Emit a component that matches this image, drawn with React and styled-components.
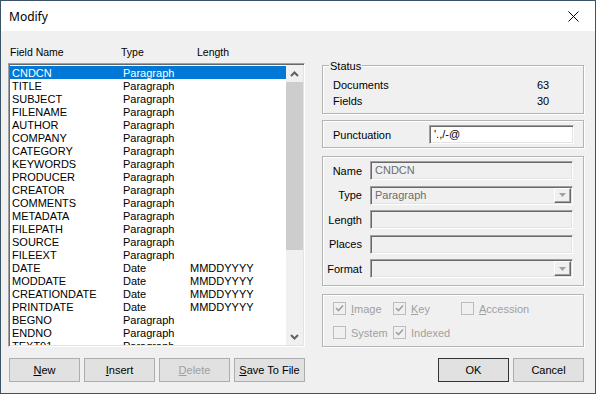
import React from 'react';
import styled, { createGlobalStyle } from 'styled-components';

const GlobalStyle = createGlobalStyle`
  html, body {
    margin: 0;
    padding: 0;
    background: #ffffff;
  }
  * {
    box-sizing: border-box;
  }
`;

const fields = [
  ['CNDCN', 'Paragraph', ''],
  ['TITLE', 'Paragraph', ''],
  ['SUBJECT', 'Paragraph', ''],
  ['FILENAME', 'Paragraph', ''],
  ['AUTHOR', 'Paragraph', ''],
  ['COMPANY', 'Paragraph', ''],
  ['CATEGORY', 'Paragraph', ''],
  ['KEYWORDS', 'Paragraph', ''],
  ['PRODUCER', 'Paragraph', ''],
  ['CREATOR', 'Paragraph', ''],
  ['COMMENTS', 'Paragraph', ''],
  ['METADATA', 'Paragraph', ''],
  ['FILEPATH', 'Paragraph', ''],
  ['SOURCE', 'Paragraph', ''],
  ['FILEEXT', 'Paragraph', ''],
  ['DATE', 'Date', 'MMDDYYYY'],
  ['MODDATE', 'Date', 'MMDDYYYY'],
  ['CREATIONDATE', 'Date', 'MMDDYYYY'],
  ['PRINTDATE', 'Date', 'MMDDYYYY'],
  ['BEGNO', 'Paragraph', ''],
  ['ENDNO', 'Paragraph', ''],
  ['TEXT01', 'Paragraph', ''],
];

const Window = styled.div`
  width: 596px;
  height: 394px;
  border: 1px solid #3b5468;
  display: flex;
  flex-direction: column;
  background: #f0f0f0;
  font-family: "Liberation Sans", Arial, sans-serif;
  font-size: 11px;
  color: #000;
  overflow: hidden;
`;

const TitleBar = styled.div`
  height: 30px;
  flex: none;
  background: #fff;
  display: flex;
  align-items: center;
  justify-content: space-between;
  padding: 0 16px 0 8px;
`;

const Title = styled.span`
  font-family: "Noto Sans", sans-serif;
  font-size: 12px;
  color: #000;
`;

const CloseIcon = () => (
  <svg width="11" height="11" viewBox="0 0 11 11">
    <path d="M0.5 0.5 L10.5 10.5 M10.5 0.5 L0.5 10.5" stroke="#000" strokeWidth="1" fill="none" />
  </svg>
);

const Body = styled.div`
  flex: 1;
  display: flex;
  flex-direction: column;
  padding: 14px 10px 11px 7px;
`;

const Main = styled.div`
  display: flex;
  gap: 17px;
`;

const LeftPane = styled.div`
  width: 297px;
  display: flex;
  flex-direction: column;
`;

const HeaderRow = styled.div`
  height: 14px;
  line-height: 15px;
  display: grid;
  grid-template-columns: 111px 76px 1fr;
  padding-left: 2px;
  margin-bottom: 4px;
  font-size: 10.5px;
`;

const ListBox = styled.div`
  height: 284px;
  background: #fff;
  border: 1px solid;
  border-color: #a0a0a0 #fff #fff #a0a0a0;
  box-shadow: inset 1px 1px 0 #696969, inset -1px -1px 0 #e3e3e3;
  padding: 1px;
  display: flex;
  overflow: hidden;
`;

const Rows = styled.div`
  flex: 1;
  overflow: hidden;
  padding-top: 1px;
`;

const Row = styled.div`
  height: 13px;
  line-height: 15px;
  display: grid;
  grid-template-columns: 111px 67px 1fr;
  padding-left: 2px;
  white-space: nowrap;
  background: ${p => (p.$selected ? '#0078d7' : 'transparent')};
  color: ${p => (p.$selected ? '#fff' : '#000')};
`;

const ScrollBar = styled.div`
  width: 17px;
  display: flex;
  flex-direction: column;
  background: #f0f0f0;
`;

const ScrollArrow = styled.div`
  height: 17px;
  display: flex;
  align-items: center;
  justify-content: center;
`;

const ScrollThumb = styled.div`
  height: 168px;
  background: #cdcdcd;
`;

const ScrollTrack = styled.div`
  flex: 1;
`;

const Chevron = ({ down }) => (
  <svg width="9" height="6" viewBox="0 0 9 6" style={{ transform: down ? 'rotate(180deg)' : 'none' }}>
    <path d="M1 5 L4.5 1.5 L8 5" stroke="#606060" strokeWidth="2" fill="none" />
  </svg>
);

const RightPane = styled.div`
  width: 262px;
  display: flex;
  flex-direction: column;
  padding-top: 20px;
  gap: 6px;
`;

const GroupBox = styled.div`
  position: relative;
  height: ${p => p.$h}px;
  margin-top: ${p => p.$mt || 0}px;
  border: 1px solid #b4b4b4;
  box-shadow: inset 1px 1px 0 #fff, 1px 1px 0 #fff;
`;

const GroupLabel = styled.span`
  position: absolute;
  top: -6px;
  left: 6px;
  padding: 0 1px;
  line-height: 13px;
  background: #f0f0f0;
`;

const StatusList = styled.div`
  padding: 11px 0 0 10px;
  display: flex;
  flex-direction: column;
`;

const StatusRow = styled.div`
  height: 16px;
  line-height: 16px;
  display: grid;
  grid-template-columns: 204px auto;
`;

const PunctRow = styled.div`
  height: 100%;
  display: flex;
  align-items: center;
  padding: 1px 0 0 10px;
`;

const PunctLabel = styled.span`
  width: 96px;
`;

const TextInput = styled.div`
  height: ${p => p.$h || 19}px;
  width: ${p => p.$w}px;
  border: 1px solid;
  border-color: #a0a0a0 #fff #fff #a0a0a0;
  box-shadow: inset 1px 1px 0 #696969, inset -1px -1px 0 #e3e3e3;
  background: ${p => (p.$disabled ? '#f0f0f0' : '#fff')};
  color: ${p => (p.$disabled ? '#6d6d6d' : '#000')};
  display: flex;
  align-items: center;
  justify-content: space-between;
  padding: 0 2px 0 4px;
  line-height: 13px;
`;

const DropButton = styled.div`
  width: 17px;
  height: 15px;
  background: #f0f0f0;
  border: 1px solid;
  border-color: #fff #696969 #696969 #fff;
  box-shadow: inset -1px -1px 0 #a0a0a0;
  display: flex;
  align-items: center;
  justify-content: center;
  margin-right: -1px;
`;

const Triangle = () => (
  <svg width="7" height="4" viewBox="0 0 7 4">
    <path d="M0 0 H7 L3.5 4 Z" fill="#a0a0a0" />
  </svg>
);

const FieldForm = styled.div`
  padding: 4px 10px 0 0;
  display: flex;
  flex-direction: column;
  gap: 5.5px;
`;

const FormRow = styled.div`
  display: flex;
  align-items: center;
  gap: 8px;
`;

const FormLabel = styled.span`
  width: 39px;
  text-align: right;
  white-space: nowrap;
`;

const CheckGrid = styled.div`
  display: grid;
  grid-template-columns: 60px 68px auto;
  row-gap: 11px;
  padding: 7px 0 0 10px;
`;

const CheckItem = styled.div`
  height: 13px;
  display: flex;
  align-items: center;
  gap: 5px;
  color: #a0a0a0;
`;

const CheckBox = styled.span`
  width: 13px;
  height: 13px;
  border: 1px solid #bcbcbc;
  background: #f0f0f0;
  display: flex;
  align-items: center;
  justify-content: center;
`;

const Check = () => (
  <svg width="9" height="9" viewBox="0 0 9 9">
    <path d="M1 4 L3.5 6.5 L8 1.5" stroke="#a0a0a0" strokeWidth="1.6" fill="none" />
  </svg>
);

const Key = styled.u`
  text-decoration-thickness: 1px;
`;

const ButtonBar = styled.div`
  margin-top: 11px;
  display: flex;
  gap: 4px;
  padding-left: 1px;
`;

const Button = styled.button`
  width: 71px;
  height: 24px;
  margin-left: ${p => p.$ml || 0}px;
  background: #e1e1e1;
  border: 1px solid ${p => (p.$default ? '#333333' : '#adadad')};
  font-family: "Liberation Sans", Arial, sans-serif;
  font-size: 11px;
  color: ${p => (p.$disabled ? '#a0a0a0' : '#000')};
  padding: 0;
`;

const Checked = ({ checked, label, hot }) => (
  <CheckItem>
    <CheckBox>{checked && <Check />}</CheckBox>
    <span>
      <Key>{label.slice(0, hot)}</Key>
      {label.slice(hot)}
    </span>
  </CheckItem>
);

export default function App() {
  return (
    <>
      <GlobalStyle />
      <Window>
        <TitleBar>
          <Title>Modify</Title>
          <CloseIcon />
        </TitleBar>
        <Body>
          <Main>
            <LeftPane>
              <HeaderRow>
                <span>Field Name</span>
                <span>Type</span>
                <span>Length</span>
              </HeaderRow>
              <ListBox>
                <Rows>
                  {fields.map(([name, type, len], i) => (
                    <Row key={name} $selected={i === 0}>
                      <span>{name}</span>
                      <span>{type}</span>
                      <span>{len}</span>
                    </Row>
                  ))}
                </Rows>
                <ScrollBar>
                  <ScrollArrow><Chevron /></ScrollArrow>
                  <ScrollThumb />
                  <ScrollTrack />
                  <ScrollArrow><Chevron down /></ScrollArrow>
                </ScrollBar>
              </ListBox>
            </LeftPane>
            <RightPane>
              <GroupBox $h={49}>
                <GroupLabel>Status</GroupLabel>
                <StatusList>
                  <StatusRow><span>Documents</span><span>63</span></StatusRow>
                  <StatusRow><span>Fields</span><span>30</span></StatusRow>
                </StatusList>
              </GroupBox>
              <GroupBox $h={28}>
                <PunctRow>
                  <PunctLabel>Punctuation</PunctLabel>
                  <TextInput $w={145} $h={19}>'.,/-@</TextInput>
                </PunctRow>
              </GroupBox>
              <GroupBox $h={130} $mt={2}>
                <FieldForm>
                  <FormRow>
                    <FormLabel>Name</FormLabel>
                    <TextInput $w={203} $disabled>CNDCN</TextInput>
                  </FormRow>
                  <FormRow>
                    <FormLabel>Type</FormLabel>
                    <TextInput $w={203} $disabled>
                      Paragraph
                      <DropButton><Triangle /></DropButton>
                    </TextInput>
                  </FormRow>
                  <FormRow>
                    <FormLabel>Length</FormLabel>
                    <TextInput $w={203} $disabled />
                  </FormRow>
                  <FormRow>
                    <FormLabel>Places</FormLabel>
                    <TextInput $w={203} $disabled />
                  </FormRow>
                  <FormRow>
                    <FormLabel>Format</FormLabel>
                    <TextInput $w={203} $disabled>
                      <span />
                      <DropButton><Triangle /></DropButton>
                    </TextInput>
                  </FormRow>
                </FieldForm>
              </GroupBox>
              <GroupBox $h={53} $mt={2}>
                <CheckGrid>
                  <Checked checked label="Image" hot={1} />
                  <Checked checked label="Key" hot={1} />
                  <Checked label="Accession" hot={1} />
                  <Checked label="System" hot={0} />
                  <Checked checked label="Indexed" hot={0} />
                </CheckGrid>
              </GroupBox>
            </RightPane>
          </Main>
          <ButtonBar>
            <Button><Key>N</Key>ew</Button>
            <Button><Key>I</Key>nsert</Button>
            <Button $disabled><Key>D</Key>elete</Button>
            <Button><Key>S</Key>ave To File</Button>
            <Button $ml={129} $default>OK</Button>
            <Button>Cancel</Button>
          </ButtonBar>
        </Body>
      </Window>
    </>
  );
}
